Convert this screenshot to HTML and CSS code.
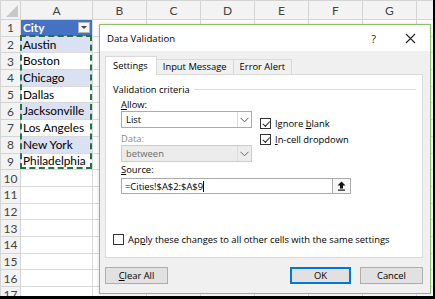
FILE: index.html
```html
<!DOCTYPE html>
<html lang="en">

<head>
    <meta charset="UTF-8">
    <title>Data Validation</title>
    <link rel="stylesheet" href="styles.css">
</head>

<body>
    <div class="frame">
        <!-- Foglio di calcolo -->
        <table class="sheet">
            <colgroup>
                <col class="c-num"><col class="c-a"><col class="c-std"><col class="c-std"><col class="c-std"><col class="c-std"><col class="c-std"><col class="c-std"><col class="c-rest">
            </colgroup>
            <tr class="head">
                <th class="corner"><span class="tri"></span></th>
                <th>A</th><th>B</th><th>C</th><th>D</th><th>E</th><th>F</th><th>G</th><th></th>
            </tr>
            <tr>
                <th>1</th>
                <td class="city">City<span class="filter"></span></td>
                <td></td><td></td><td></td><td></td><td></td><td></td><td></td>
            </tr>
            <tr><th>2</th><td class="band">Austin</td><td></td><td></td><td></td><td></td><td></td><td></td><td></td></tr>
            <tr><th>3</th><td>Boston</td><td></td><td></td><td></td><td></td><td></td><td></td><td></td></tr>
            <tr><th>4</th><td class="band">Chicago</td><td></td><td></td><td></td><td></td><td></td><td></td><td></td></tr>
            <tr><th>5</th><td>Dallas</td><td></td><td></td><td></td><td></td><td></td><td></td><td></td></tr>
            <tr><th>6</th><td class="band">Jacksonville</td><td></td><td></td><td></td><td></td><td></td><td></td><td></td></tr>
            <tr><th>7</th><td>Los Angeles</td><td></td><td></td><td></td><td></td><td></td><td></td><td></td></tr>
            <tr><th>8</th><td class="band">New York</td><td></td><td></td><td></td><td></td><td></td><td></td><td></td></tr>
            <tr><th>9</th><td>Philadelphia</td><td></td><td></td><td></td><td></td><td></td><td></td><td></td></tr>
            <tr><th>10</th><td></td><td></td><td></td><td></td><td></td><td></td><td></td><td></td></tr>
            <tr><th>11</th><td></td><td></td><td></td><td></td><td></td><td></td><td></td><td></td></tr>
            <tr><th>12</th><td></td><td></td><td></td><td></td><td></td><td></td><td></td><td></td></tr>
            <tr><th>13</th><td></td><td></td><td></td><td></td><td></td><td></td><td></td><td></td></tr>
            <tr><th>14</th><td></td><td></td><td></td><td></td><td></td><td></td><td></td><td></td></tr>
            <tr><th>15</th><td></td><td></td><td></td><td></td><td></td><td></td><td></td><td></td></tr>
            <tr><th>16</th><td></td><td></td><td></td><td></td><td></td><td></td><td></td><td></td></tr>
            <tr><th>17</th><td></td><td></td><td></td><td></td><td></td><td></td><td></td><td></td></tr>
        </table>

        <!-- bordo tratteggiato della selezione copiata -->
        <div class="ants"></div>

        <!-- Finestra di dialogo -->
        <div class="dialog">
            <div class="titlebar">
                <span class="title">Data Validation</span>
                <span class="help">?</span>
                <svg class="close" width="11" height="11" viewBox="0 0 11 11"><path d="M1 1L10 10M10 1L1 10" stroke="#222" stroke-width="1.1" fill="none"/></svg>
            </div>
            <div class="body">
                <div class="tabs">
                    <div class="tab active">Settings</div>
                    <div class="tab">Input Message</div>
                    <div class="tab">Error Alert</div>
                </div>
                <div class="panel">
                    <div class="legend"><span>Validation criteria</span><i></i></div>
                    <div class="criteria">
                        <div class="left">
                            <div class="label"><u>A</u>llow:</div>
                            <div class="select">
                                <span>List</span>
                                <span class="arrow"><svg width="9" height="6" viewBox="0 0 9 6"><path d="M0.5 0.8L4.5 4.8L8.5 0.8" stroke="#555" fill="none"/></svg></span>
                            </div>
                            <div class="label muted">Data:</div>
                            <div class="select disabled">
                                <span>between</span>
                                <span class="arrow"><svg width="9" height="6" viewBox="0 0 9 6"><path d="M0.5 0.8L4.5 4.8L8.5 0.8" stroke="#666" fill="none"/></svg></span>
                            </div>
                        </div>
                        <div class="checks">
                            <label class="check"><span class="box on"></span><span>Ignore <u>b</u>lank</span></label>
                            <label class="check"><span class="box on"></span><span><u>I</u>n-cell dropdown</span></label>
                        </div>
                    </div>
                    <div class="label source-label"><u>S</u>ource:</div>
                    <div class="source">
                        <span class="value">=Cities!$A$2:$A$9<b class="caret"></b></span>
                        <span class="pick"><svg width="9" height="10" viewBox="0 0 9 10"><path d="M4.5 0.5L8.5 4.5H6V7.5H3V4.5H0.5Z" fill="#111"/><rect x="1" y="8.5" width="7" height="1.2" fill="#111"/></svg></span>
                    </div>
                    <label class="check apply"><span class="box"></span><span>Ap<u>p</u>ly these changes to all other cells with the same settings</span></label>
                </div>
                <div class="buttons">
                    <button class="btn"><u>C</u>lear All</button>
                    <span class="spacer"></span>
                    <button class="btn default">OK</button>
                    <button class="btn">Cancel</button>
                </div>
            </div>
        </div>
    </div>
</body>

</html>
```

FILE: styles.css
```css
body {
    margin: 0;
    background: #ffffff;
}

.frame {
    position: relative;
    width: 435px;
    height: 299px;
    box-sizing: border-box;
    border-right: 2px solid #000;
    border-bottom: 3px solid #000;
    overflow: hidden;
}

/* Foglio */
.sheet {
    border-collapse: collapse;
    table-layout: fixed;
    width: 450px;
    font-family: 'Lato', 'Liberation Sans', sans-serif;
    font-size: 11.8px;
    color: #000;
}

.c-num { width: 20px; }
.c-a { width: 72px; }
.c-std { width: 54px; }
.c-rest { width: 34px; }

.sheet tr {
    height: 16.7px;
}

.sheet tr.head {
    height: 19px;
}

.sheet th {
    background: #f3f3f3;
    color: #444;
    font-weight: normal;
    border: 1px solid #d4d4d4;
    padding: 0;
    text-align: center;
    font-size: 12px;
}

.sheet td {
    border: 1px solid #d9d9d9;
    padding: 0 0 0 2px;
    white-space: nowrap;
    overflow: hidden;
    line-height: 14px;
}

.corner {
    position: relative;
}

.tri {
    position: absolute;
    right: 2px;
    bottom: 2px;
    width: 0;
    height: 0;
    border-left: 12px solid transparent;
    border-bottom: 12px solid #c8c8c8;
}

.sheet td.city {
    background: #4472c4;
    color: #fff;
    font-weight: bold;
    position: relative;
}

.filter {
    position: absolute;
    right: 2px;
    top: 2px;
    width: 12px;
    height: 11px;
    box-sizing: border-box;
    background: #f4f4f4;
    border: 1px solid #b5b5b5;
}

.filter::after {
    content: "";
    position: absolute;
    left: 2px;
    top: 3px;
    border-left: 3px solid transparent;
    border-right: 3px solid transparent;
    border-top: 3px solid #444;
}

.sheet td.band {
    background: #d9e1f2;
}

.ants {
    position: absolute;
    left: 20px;
    top: 35px;
    width: 72px;
    height: 134px;
    box-sizing: border-box;
    border: 2px dashed #217346;
}

/* Finestra */
.dialog {
    position: absolute;
    left: 99px;
    top: 24px;
    width: 332px;
    height: 270px;
    box-sizing: border-box;
    border: 1px solid #8cc265;
    background: #f0f0f0;
    font-family: 'Open Sans', 'Noto Sans', sans-serif;
    font-size: 9.4px;
    color: #000;
    display: flex;
    flex-direction: column;
    box-shadow: 0 0 4px rgba(0, 0, 0, 0.15);
}

.titlebar {
    height: 26px;
    background: #fff;
    display: flex;
    align-items: center;
    padding: 0 14px 0 7px;
}

.title {
    font-size: 9.6px;
    flex: 1;
}

.help {
    font-size: 11px;
    margin-right: 29px;
    color: #222;
}

.body {
    flex: 1;
    padding: 5px 7px 0 5px;
    display: flex;
    flex-direction: column;
}

.tabs {
    display: flex;
    align-items: flex-end;
    height: 18px;
    position: relative;
    z-index: 1;
}

.tab {
    height: 15px;
    line-height: 14px;
    padding: 0 6px;
    border: 1px solid #d9d9d9;
    border-bottom: none;
    border-left: none;
    box-sizing: border-box;
    background: #f0f0f0;
}

.tab.active {
    height: 19px;
    line-height: 17px;
    border-left: 1px solid #d9d9d9;
    background: #fff;
    padding: 0 8px 0 7px;
    margin-bottom: -1px;
}

.panel {
    height: 184px;
    box-sizing: border-box;
    background: #fff;
    border: 1px solid #d9d9d9;
    padding: 8px 6px 0 7px;
}

.legend {
    display: flex;
    align-items: center;
    height: 12px;
}

.legend i {
    flex: 1;
    margin-left: 4px;
    border-top: 1px solid #dcdcdc;
}

.criteria {
    display: flex;
    padding-left: 8px;
}

.left {
    width: 131px;
}

.label {
    height: 13px;
    line-height: 13px;
    margin-top: 3px;
}

.label.muted {
    color: #8a8a8a;
    margin-top: 4px;
}

.select {
    display: flex;
    height: 17px;
    box-sizing: border-box;
    border: 1px solid #ababab;
    background: #fff;
    align-items: center;
}

.select span:first-child {
    flex: 1;
    padding-left: 4px;
}

.select .arrow {
    width: 13px;
    height: 15px;
    border-left: 1px solid #dcdcdc;
    display: flex;
    align-items: center;
    justify-content: center;
}

.select.disabled {
    background: #ececec;
    border-color: #cccccc;
    color: #6d6d6d;
}

.checks {
    padding: 20px 0 0 8px;
}

.check {
    display: flex;
    align-items: center;
    height: 16px;
}

.box {
    width: 9px;
    height: 9px;
    border: 1px solid #333;
    background: #fff;
    margin-right: 4px;
    position: relative;
}

.box.on::after {
    content: "";
    position: absolute;
    left: 1px;
    top: 0;
    width: 6px;
    height: 3px;
    border-left: 1.2px solid #222;
    border-bottom: 1.2px solid #222;
    transform: rotate(-48deg) translate(-1px, 2px);
}

.source-label {
    padding-left: 8px;
    margin-top: 1px;
}

.source {
    display: flex;
    margin-left: 8px;
    width: 230px;
    height: 16px;
    box-sizing: border-box;
    border: 1px solid #ababab;
    align-items: center;
    margin-top: 2px;
}

.value {
    flex: 1;
    padding-left: 3px;
}

.caret {
    display: inline-block;
    width: 1px;
    height: 11px;
    background: #000;
    vertical-align: -2px;
}

.pick {
    width: 17px;
    height: 14px;
    border-left: 1px solid #ababab;
    background: #f7f7f7;
    display: flex;
    align-items: center;
    justify-content: center;
}

.check.apply {
    margin-top: 37px;
}

.buttons {
    display: flex;
    margin-top: 9px;
    padding-right: 0;
}

.btn {
    width: 63px;
    height: 17px;
    padding: 0;
    font-family: inherit;
    font-size: 9.4px;
    background: #e1e1e1;
    border: 1px solid #adadad;
    color: #000;
    margin-left: 9px;
}

.btn:first-child {
    margin-left: 0;
}

.btn.default {
    width: 61px;
    border: 1px solid #0078d7;
    box-shadow: inset 0 0 0 1px #0078d7;
}

.spacer {
    flex: 1;
}
```
